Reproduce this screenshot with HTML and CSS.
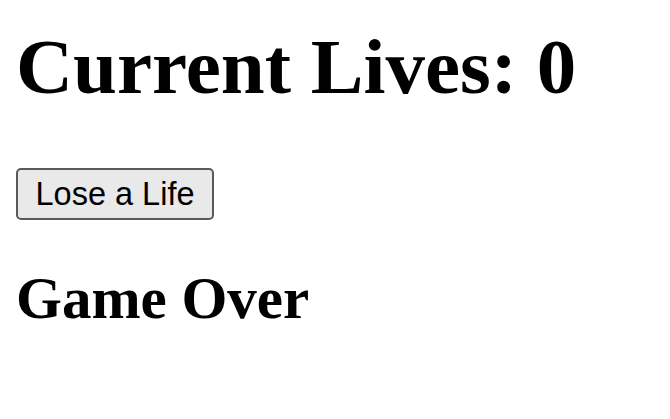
FILE: index.html
```html
<!DOCTYPE html>
<html>
<head>
<meta charset="utf-8">
<link rel="stylesheet" href="styles.css">
</head>
<body>
<div class="app">
  <h1 class="lives">Current Lives: 0</h1>
  <div class="actions"><button class="lose-btn">Lose a Life</button></div>
  <h2 class="status">Game Over</h2>
</div>
</body>
</html>
```
FILE: styles.css
```css
html, body {
  margin: 0;
  padding: 0;
  background: #ffffff;
}
.app {
  padding: 0 16px;
  font-family: "Liberation Serif", "Times New Roman", serif;
  color: #000;
}
.lives {
  margin: 22px 0 0;
  font-size: 79px;
  line-height: 1.15;
  font-weight: bold;
}
.actions {
  margin-top: 55px;
}
.lose-btn {
  display: block;
  box-sizing: border-box;
  height: 52px;
  width: 198px;
  padding: 0 16px;
  font-family: "Liberation Sans", Arial, sans-serif;
  font-size: 32.5px;
  line-height: 1;
  color: #000;
  background: #e9e9e9;
  border: 2px solid #5a5a5a;
  border-radius: 5px;
  text-align: center;
}
.status {
  margin: 45px 0 0;
  font-size: 59px;
  line-height: 1.15;
  font-weight: bold;
}
```
